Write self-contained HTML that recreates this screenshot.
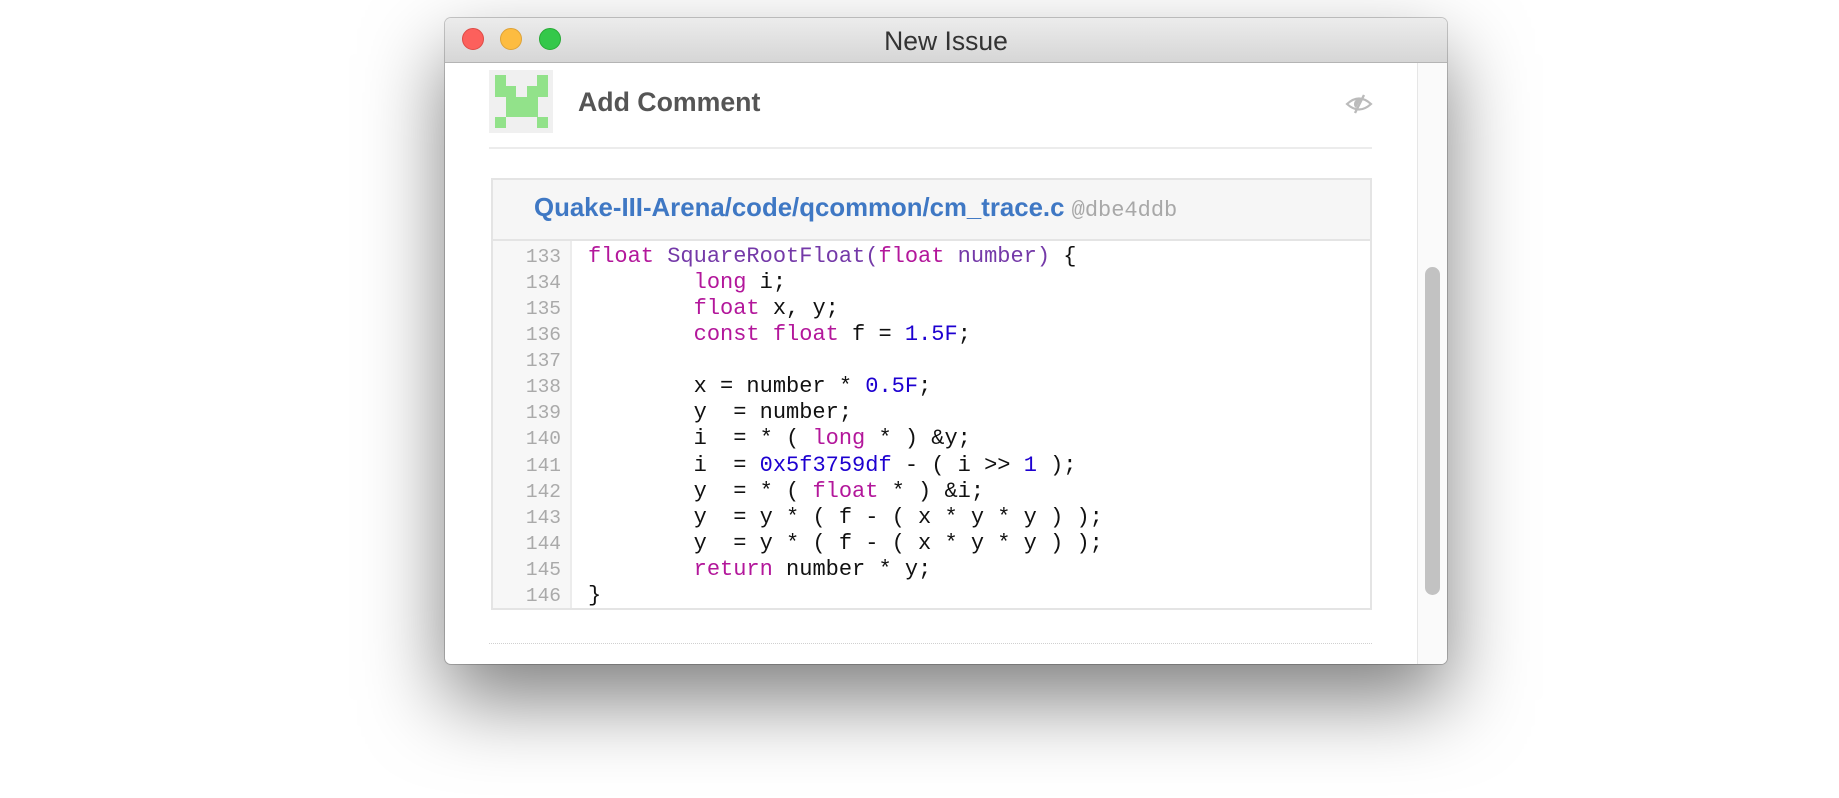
<!DOCTYPE html>
<html><head><meta charset="utf-8"><style>
html,body{margin:0;padding:0;background:#fff;width:1839px;height:798px;overflow:hidden;font-family:"Liberation Sans",sans-serif}
.win{position:absolute;left:445px;top:18px;width:1002px;height:646px;border-radius:6px;background:#fff;box-shadow:0 0 0 1px rgba(0,0,0,.2),0 36px 80px rgba(0,0,0,.5);overflow:hidden}
.tb{position:absolute;left:0;top:0;width:100%;height:44px;background:linear-gradient(#ececec,#d6d6d6);border-bottom:1px solid #b4b4b4}
.tl{position:absolute;top:10px;width:22px;height:22px;border-radius:50%}
.title{position:absolute;left:0;right:0;top:8px;text-align:center;font-size:26.5px;color:#333}
.sb{position:absolute;left:972px;top:45px;width:30px;bottom:0;background:#fafafa;border-left:1px solid #e6e6e6}
.thumb{position:absolute;left:980px;top:249px;width:15px;height:328px;border-radius:8px;background:#c2c2c2}
.av{position:absolute;left:44px;top:52px;width:64px;height:63px;background:#f0f0f0}
.av i{position:absolute;width:11px;height:11px;background:#92e28a}
.ac{position:absolute;left:133px;top:69px;font-size:26.7px;font-weight:bold;color:#555}
.sep{position:absolute;left:44px;top:129px;width:883px;height:2px;background:#ececec}
.box{position:absolute;left:46px;top:160px;width:881px;height:432px;border:2px solid #e4e4e4;box-sizing:border-box}
.hd{position:absolute;left:0;top:0;right:0;height:59px;background:#f6f6f6;border-bottom:2px solid #e4e4e4}
.path{position:absolute;left:41px;top:14px;font-size:25.8px;font-weight:bold;color:#3f78c4;white-space:nowrap}
.path span{font-family:"Liberation Mono",monospace;font-weight:normal;color:#a8a8a8;font-size:22px}
.gut{position:absolute;left:0;top:61px;width:77px;bottom:0;background:#f7f7f7;border-right:2px solid #ececec}
.ln{position:absolute;left:0;top:64px;width:68px;text-align:right;font-family:"Liberation Mono",monospace;font-size:19.5px;line-height:26.07px;color:#aaa}
.code{position:absolute;left:95px;top:64px;font-family:"Liberation Mono",monospace;font-size:22px;line-height:26.07px;color:#111;white-space:pre}
.k{color:#b3179b}.f{color:#7439a8}.n{color:#1d00d0}
.dot{position:absolute;left:44px;top:625px;width:883px;border-top:1px dotted #d0d0d0}
</style></head><body>
<div class="win">
 <div class="tb">
  <div class="tl" style="left:17px;background:#fc605c;border:1px solid #de4a45;box-sizing:border-box"></div>
  <div class="tl" style="left:55px;background:#fdbc40;border:1px solid #dea236;box-sizing:border-box"></div>
  <div class="tl" style="left:94px;background:#34c84a;border:1px solid #27aa35;box-sizing:border-box"></div>
  <div class="title">New Issue</div>
 </div>
 <div class="sb"></div><div class="thumb"></div>
 <div class="av">
  <i style="left:6px;top:5px"></i><i style="left:48px;top:5px"></i>
  <i style="left:6px;top:16px;width:21px"></i><i style="left:38px;top:16px;width:21px"></i>
  <i style="left:17px;top:27px;width:32px;height:20px"></i>
  <i style="left:6px;top:47px"></i><i style="left:48px;top:47px"></i>
 </div>
 <div class="ac">Add Comment</div>
 <svg style="position:absolute;left:900px;top:76px" width="28" height="20" viewBox="0 0 28 20"><path d="M2 10 Q14 -1 26 10 Q14 21 2 10Z" fill="none" stroke="#bbb" stroke-width="2.2"/><path d="M14 5 A5 5 0 0 0 11 14 L16 5Z" fill="#bbb"/><path d="M19 1 L10 19" stroke="#bbb" stroke-width="2.4"/></svg>
 <div class="sep"></div>
 <div class="box">
  <div class="hd"><div class="path">Quake-III-Arena/code/qcommon/cm_trace.c <span>@dbe4ddb</span></div></div>
  <div class="gut"></div>
  <div class="ln">133<br>134<br>135<br>136<br>137<br>138<br>139<br>140<br>141<br>142<br>143<br>144<br>145<br>146</div>
<div class="code"><span class="k">float</span> <span class="f">SquareRootFloat(</span><span class="k">float</span> <span class="f">number)</span> {
        <span class="k">long</span> i;
        <span class="k">float</span> x, y;
        <span class="k">const</span> <span class="k">float</span> f = <span class="n">1.5F</span>;

        x = number * <span class="n">0.5F</span>;
        y  = number;
        i  = * ( <span class="k">long</span> * ) &amp;y;
        i  = <span class="n">0x5f3759df</span> - ( i &gt;&gt; <span class="n">1</span> );
        y  = * ( <span class="k">float</span> * ) &amp;i;
        y  = y * ( f - ( x * y * y ) );
        y  = y * ( f - ( x * y * y ) );
        <span class="k">return</span> number * y;
}</div>
 </div>
 <div class="dot"></div>
</div>
</body></html>
